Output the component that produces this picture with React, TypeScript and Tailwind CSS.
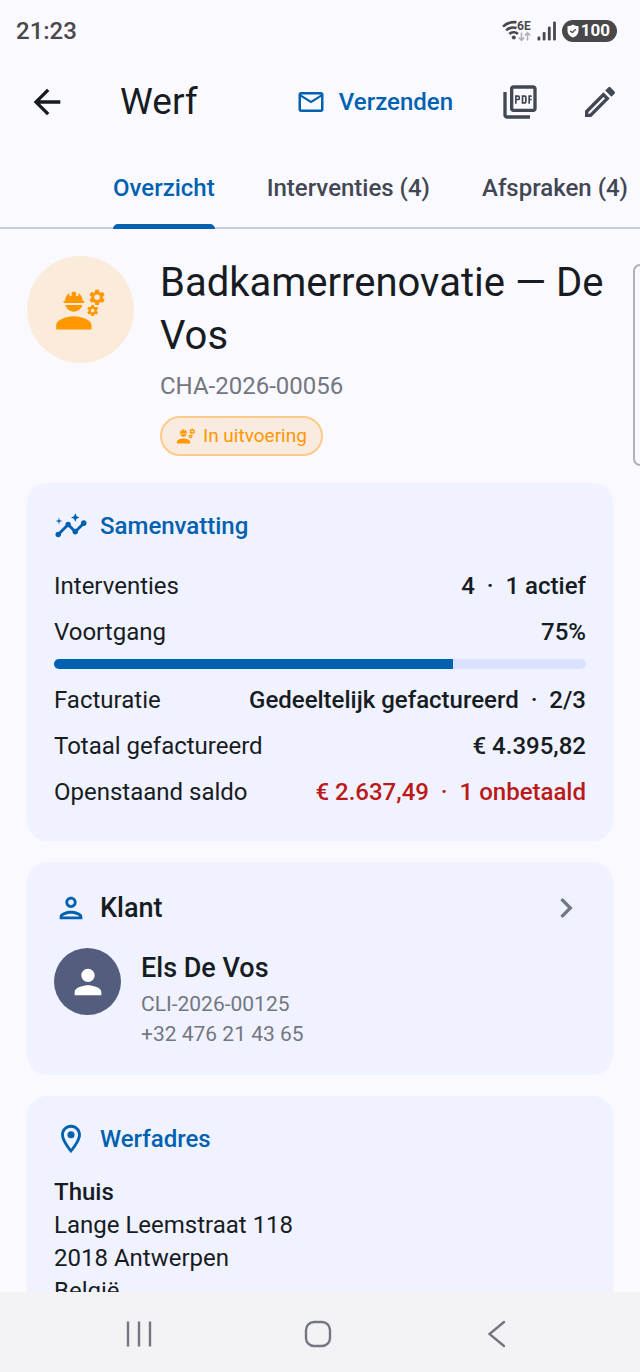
import type { ReactNode } from "react";
import {
  MdArrowBack,
  MdChevronRight,
  MdEngineering,
  MdInsights,
  MdMailOutline,
  MdOutlineEdit,
  MdOutlinePerson,
  MdOutlinePictureAsPdf,
  MdPerson,
} from "react-icons/md";

interface SummaryRow {
  label: string;
  value: string;
  danger?: boolean;
}

const tabs = ["Overzicht", "Interventies (4)", "Afspraken (4)"];

const progress = 75;

const workRows: SummaryRow[] = [
  { label: "Interventies", value: "4 \u00a0·\u00a0 1 actief" },
  { label: "Voortgang", value: `${progress}%` },
];

const invoiceRows: SummaryRow[] = [
  { label: "Facturatie", value: "Gedeeltelijk gefactureerd \u00a0·\u00a0 2/3" },
  { label: "Totaal gefactureerd", value: "€ 4.395,82" },
  {
    label: "Openstaand saldo",
    value: "€ 2.637,49 \u00a0·\u00a0 1 onbetaald",
    danger: true,
  },
];

const WifiIcon = () => (
  <svg width="30" height="22" viewBox="0 0 30 22" fill="none">
    <g stroke="#48484b" strokeWidth="2.6">
      <path d="M1 6.600C4.500 3.300 9.500 1.700 14.500 2.200" />
      <path d="M4.200 10.400C7 7.700 11 6.900 14.500 8" />
      <path d="M7.400 14C9.600 11.700 13.600 11.700 15.900 14" />
    </g>
    <circle cx="11.800" cy="17.400" r="2" fill="#48484b" />
    <text
      x="15"
      y="10"
      fontSize="12"
      fontWeight="700"
      fontFamily="Roboto, sans-serif"
      fill="#48484b"
    >
      6E
    </text>
    <path
      d="M19.500 12.500v7.500M16.800 17.500l2.700 2.800 2.700-2.800M25.500 20.500v-7.500M22.800 15.500l2.700-2.800 2.700 2.800"
      stroke="#b0b0b8"
      strokeWidth="1.600"
    />
  </svg>
);

const SignalIcon = () => (
  <svg width="20" height="20" viewBox="0 0 20 20" fill="#48484b">
    <rect x="0.500" y="15.500" width="2.800" height="4" rx="1.200" />
    <rect x="5.700" y="11" width="2.800" height="8.500" rx="1.200" />
    <rect x="10.900" y="5.500" width="2.800" height="14" rx="1.200" />
    <rect x="16.100" y="0.500" width="2.800" height="19" rx="1.200" />
  </svg>
);

const ShieldIcon = () => (
  <svg width="12" height="14" viewBox="0 0 12 14">
    <path
      d="M6 0.500C7.500 1.700 9.300 2.200 11.500 2.200V7C11.500 10 9.300 12.300 6 13.500C2.700 12.300 0.500 10 0.500 7V2.200C2.700 2.200 4.500 1.700 6 0.500Z"
      fill="#fff"
    />
    <path d="M3.300 6.700l2 2 3.500-3.500" fill="none" stroke="#48484b" strokeWidth="1.300" />
  </svg>
);

const PinIcon = () => (
  <svg width="34" height="34" viewBox="0 0 24 24" fill="currentColor">
    <path d="M12 2C8.130 2 5 5.130 5 9c0 5.250 7 13 7 13s7-7.750 7-13c0-3.870-3.130-7-7-7zM7 9c0-2.760 2.240-5 5-5s5 2.240 5 5c0 2.880-2.880 7.190-5 9.880C9.920 16.210 7 11.850 7 9z" />
    <circle cx="12" cy="9" r="2.500" />
  </svg>
);

const StatusBar = () => (
  <div className="flex h-[55px] items-center justify-between pt-[7px] pr-[23px] pl-4 text-[#48484b]">
    <span className="text-2xl font-medium">21:23</span>
    <div className="flex items-center gap-[5px]">
      <WifiIcon />
      <SignalIcon />
      <div className="flex h-[22px] items-center rounded-full bg-[#48484b] px-[5px] text-[17px] font-bold text-white">
        <ShieldIcon />
        <span className="px-0.5">100</span>
      </div>
    </div>
  </div>
);

const AppBar = () => (
  <header className="flex h-[93px] items-center pr-5 pl-[27px] text-[#414753]">
    <button aria-label="Terug" className="text-[#171c22]">
      <MdArrowBack size={40} />
    </button>
    <h1 className="ml-[53px] flex-1 text-[37px] text-[#171c22]">Werf</h1>
    <button className="flex items-center gap-[13px] text-2xl font-medium text-[#0061b0]">
      <MdMailOutline size={30} />
      Verzenden
    </button>
    <button aria-label="PDF" className="ml-[47px]">
      <MdOutlinePictureAsPdf size={40} />
    </button>
    <button aria-label="Bewerken" className="ml-10">
      <MdOutlineEdit size={40} />
    </button>
  </header>
);

const Tabs = () => (
  <nav className="flex h-[81px] shrink-0 gap-[52px] overflow-hidden pl-[113px] shadow-[inset_0_-2px_0_#c8cfda]">
    {tabs.map((tab, index) => (
      <button
        key={tab}
        className={`relative shrink-0 pb-0.5 text-2xl font-medium whitespace-nowrap ${
          index === 0 ? "text-[#0061b0]" : "text-[#414753]"
        }`}
      >
        {tab}
        {index === 0 && (
          <span className="absolute inset-x-0 bottom-0 h-[5px] rounded-t-[5px] bg-[#0061b0]" />
        )}
      </button>
    ))}
  </nav>
);

const Card = ({ children }: { children: ReactNode }) => (
  <section className="rounded-[20px] bg-[#f0f2ff] px-[27px] py-[26px]">{children}</section>
);

const CardTitle = ({ icon, children }: { icon: ReactNode; children: ReactNode }) => (
  <div className="mb-5 flex h-[34px] items-center gap-3 text-[#0061b0]">
    {icon}
    <h3 className="text-2xl font-medium">{children}</h3>
  </div>
);

const Row = ({ label, value, danger }: SummaryRow) => (
  <div className="flex h-[46px] items-center justify-between text-2xl">
    <span>{label}</span>
    <span className={`font-medium ${danger ? "text-[#ba1a1a]" : ""}`}>{value}</span>
  </div>
);

const ProjectHeader = () => (
  <div className="mb-[27px] flex items-start gap-[26px]">
    <div className="flex size-[107px] shrink-0 items-center justify-center rounded-full bg-[#faebdb] text-[#ff9800]">
      <MdEngineering size={53} />
    </div>
    <div>
      <h2 className="text-[40px] leading-[53px]">Badkamerrenovatie — De Vos</h2>
      <p className="mt-[7px] mb-[13px] text-2xl leading-[34px] text-[#73777f]">
        CHA-2026-00056
      </p>
      <span className="inline-flex h-10 items-center gap-[7px] rounded-[20px] border-2 border-[#fdcb85] bg-[#faebe0] px-3.5 align-top text-[19px] text-[#ff9800]">
        <MdEngineering size={20} />
        In uitvoering
      </span>
    </div>
  </div>
);

const Summary = () => (
  <Card>
    <CardTitle icon={<MdInsights size={34} />}>Samenvatting</CardTitle>
    {workRows.map((row) => (
      <Row key={row.label} {...row} />
    ))}
    <div className="mt-1 mb-2 h-2.5 overflow-hidden rounded-full bg-[#dce1ff]">
      <div className="h-full bg-[#0061b0]" style={{ width: `${progress}%` }} />
    </div>
    {invoiceRows.map((row) => (
      <Row key={row.label} {...row} />
    ))}
  </Card>
);

const Client = () => (
  <Card>
    <div className="mb-5 flex h-10 items-center gap-3">
      <MdOutlinePerson size={34} className="text-[#0061b0]" />
      <h3 className="flex-1 text-[27px] font-medium">Klant</h3>
      <button aria-label="Klant openen" className="text-[#73777f]">
        <MdChevronRight size={40} />
      </button>
    </div>
    <div className="flex items-start gap-5">
      <div className="flex size-[67px] shrink-0 items-center justify-center rounded-full bg-[#545d7e] text-white">
        <MdPerson size={40} />
      </div>
      <div className="text-[21px] leading-[30px] text-[#73777f]">
        <p className="text-[27px] leading-[41px] font-medium text-[#171c22]">Els De Vos</p>
        <p>CLI-2026-00125</p>
        <p>+32 476 21 43 65</p>
      </div>
    </div>
  </Card>
);

const Address = () => (
  <Card>
    <CardTitle icon={<PinIcon />}>Werfadres</CardTitle>
    <address className="text-2xl leading-[33px] not-italic">
      <p className="font-medium">Thuis</p>
      <p>Lange Leemstraat 118</p>
      <p>2018 Antwerpen</p>
      <p>België</p>
    </address>
  </Card>
);

const SystemNav = () => (
  <footer className="flex h-20 shrink-0 items-center justify-around bg-[#f3f3f5] pt-1 pr-[53px] pl-[49px] text-[#747782]">
    <button aria-label="Recente apps">
      <svg width="28" height="28" viewBox="0 0 28 28" stroke="currentColor" strokeWidth="2.400">
        <path d="M3 1.500v25M14 1.500v25M25 1.500v25" />
      </svg>
    </button>
    <button aria-label="Startscherm">
      <svg width="28" height="28" viewBox="0 0 28 28" fill="none" stroke="currentColor" strokeWidth="2.400">
        <rect x="2" y="2" width="24" height="24" rx="8" />
      </svg>
    </button>
    <button aria-label="Vorige">
      <svg width="28" height="28" viewBox="0 0 28 28" fill="none" stroke="currentColor" strokeWidth="2.400" strokeLinecap="round">
        <path d="M21 2L6.500 14L21 26" />
      </svg>
    </button>
  </footer>
);

const App = () => (
  <div className="relative flex h-screen flex-col overflow-hidden bg-[#faf9ff] font-[Roboto,sans-serif] text-[#171c22]">
    <StatusBar />
    <AppBar />
    <Tabs />
    <main className="min-h-0 flex-1 overflow-hidden px-[27px] pt-[27px]">
      <ProjectHeader />
      <div className="flex flex-col gap-[21px]">
        <Summary />
        <Client />
        <Address />
      </div>
    </main>
    <SystemNav />

    {/* Edge panel handle */}
    <div className="absolute top-[264px] right-0 h-[202px] w-[7px] rounded-l-[7px] border-2 border-r-0 border-[#b0b0b5]" />
  </div>
);

export default App;
